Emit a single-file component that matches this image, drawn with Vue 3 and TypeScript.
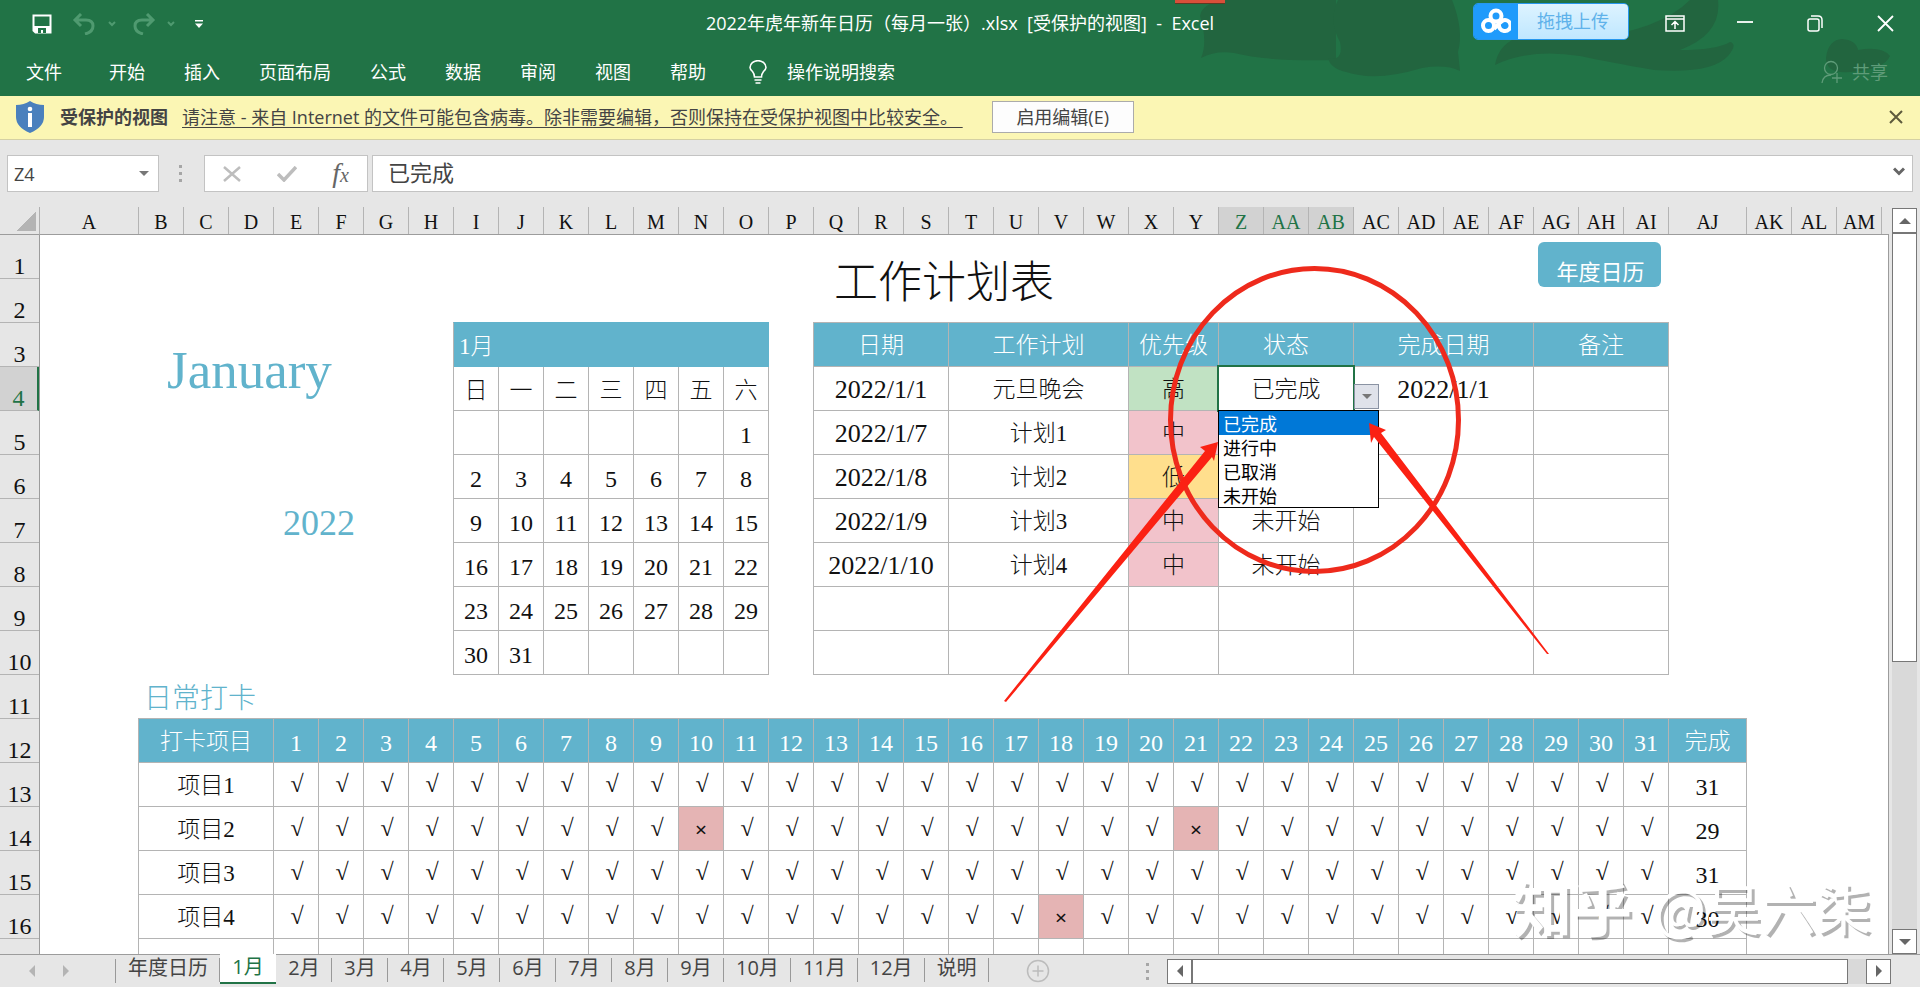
<script setup lang="ts">
import { ref } from 'vue'

interface Plan {
  date: string
  name: string
  level: string
  tone: string
  status: string
  done: string
}

const menus: string[] = ['开始', '插入', '页面布局', '公式', '数据', '审阅', '视图', '帮助']

const letters: string[] = Array.from({ length: 39 }, (_, i) =>
  i < 26 ? String.fromCharCode(65 + i) : 'A' + String.fromCharCode(65 + i - 26),
)
const selectedColumns = ['Z', 'AA', 'AB']
const rowNumbers: number[] = Array.from({ length: 16 }, (_, i) => i + 1)

const weekdays: string[] = ['日', '一', '二', '三', '四', '五', '六']
const weeks: (number | null)[][] = Array.from({ length: 6 }, (_, w) =>
  Array.from({ length: 7 }, (_, d) => {
    const day = w * 7 + d - 5
    return day >= 1 && day <= 31 ? day : null
  }),
)

const plans: Plan[] = [
  { date: '2022/1/1', name: '元旦晚会', level: '高', tone: 'high', status: '已完成', done: '2022/1/1' },
  { date: '2022/1/7', name: '计划1', level: '中', tone: 'mid', status: '', done: '' },
  { date: '2022/1/8', name: '计划2', level: '低', tone: 'low', status: '', done: '' },
  { date: '2022/1/9', name: '计划3', level: '中', tone: 'mid', status: '未开始', done: '' },
  { date: '2022/1/10', name: '计划4', level: '中', tone: 'mid', status: '未开始', done: '' },
  { date: '', name: '', level: '', tone: '', status: '', done: '' },
  { date: '', name: '', level: '', tone: '', status: '', done: '' },
]

const options: string[] = ['已完成', '进行中', '已取消', '未开始']
const chosen = ref('已完成')

const items: { name: string; missed: number[]; total: number }[] = [
  { name: '项目1', missed: [], total: 31 },
  { name: '项目2', missed: [10, 21], total: 29 },
  { name: '项目3', missed: [], total: 31 },
  { name: '项目4', missed: [18], total: 30 },
]

const tabs: string[] = ['年度日历', ...Array.from({ length: 12 }, (_, i) => `${i + 1}月`), '说明']
const activeTab = ref('1月')
const cellName = ref('Z4')
</script>

<template>
  <div class="app">
    <header class="ribbon">
      <svg class="decor" viewBox="0 0 760 96" width="760" height="96" aria-hidden="true">
        <path d="M40 16Q42 4 62 0H176V60Q110 62 74 53Q56 50 41 58Q48 42 40 16Z" />
        <path d="M178 0H292Q304 30 298 52L300 71Q286 64 262 68Q216 82 186 72Q170 68 168 58Q184 62 180 42Q168 20 178 0Z" />
        <path d="M335 65Q338 46 356 38H430Q500 30 530 0H558Q562 34 520 50Q556 50 570 42Q578 44 568 56Q552 74 494 70Q448 62 420 56Q370 48 335 65Z" />
        <path d="M666 58Q668 40 682 39Q696 40 698 50Q722 46 730 56Q724 70 690 72Q666 74 666 58Z" />
      </svg>
      <span class="marker"></span>
      <div class="titlebar">
        <div class="quick">
          <button type="button" aria-label="保存">
            <svg width="20" height="20" viewBox="0 0 20 20"><path d="M1.5 1.5h17v17h-15l-2-2z" fill="none" stroke="#fff" stroke-width="2" /><path d="M2 12h16v7H4l-2-2z" fill="#fff" /><path d="M6 14h8v5h-3v-3h-2v3H6z" fill="#217346" /></svg>
          </button>
          <button type="button" aria-label="撤消" class="dim undo">
            <svg width="24" height="22" viewBox="0 0 24 22"><path d="M9 1L3 7l6 6M3.500 7H14q7 0 7 6t-8 8" fill="none" stroke="currentColor" stroke-width="3" /></svg>
          </button>
          <button type="button" aria-label="撤消列表" class="dim"><svg width="8" height="6" viewBox="0 0 8 6"><path d="M1 1l3 3 3-3" fill="none" stroke="currentColor" stroke-width="2" /></svg></button>
          <button type="button" aria-label="恢复" class="dim redo">
            <svg width="24" height="22" viewBox="0 0 24 22"><path d="M15 1l6 6-6 6M20.500 7H10q-7 0-7 6t8 8" fill="none" stroke="currentColor" stroke-width="3" /></svg>
          </button>
          <button type="button" aria-label="恢复列表" class="dim"><svg width="8" height="6" viewBox="0 0 8 6"><path d="M1 1l3 3 3-3" fill="none" stroke="currentColor" stroke-width="2" /></svg></button>
          <button type="button" aria-label="自定义" class="custom"><svg width="8" height="8" viewBox="0 0 8 8"><path d="M0 0h8v1.500H0zM0 3.500h8L4 8z" fill="#fff" /></svg></button>
        </div>
        <h1>2022年虎年新年日历（每月一张）.xlsx&nbsp; [受保护的视图]&nbsp; -&nbsp; Excel</h1>
        <div class="window">
          <button type="button" class="upload">
            <span class="cloud"><svg width="30" height="26" viewBox="0 0 30 26" fill="none" stroke="#fff" stroke-width="4"><circle cx="15" cy="8" r="5.500" /><circle cx="7.500" cy="17.500" r="5.500" /><path d="M18 14q-1 8 5 9a5.500 5.500 0 1 0-2-10q-3 2-8 8" /></svg></span>
            <span class="drop">拖拽上传</span>
          </button>
          <button type="button" class="win" aria-label="功能区显示选项"><svg width="20" height="17" viewBox="0 0 20 17" fill="none" stroke="#fff" stroke-width="1.500"><path d="M1 1h18v15H1zM1 4h18M10 14V7M6.500 10L10 6.500l3.500 3.500" /></svg></button>
          <button type="button" class="win" aria-label="最小化"><svg width="16" height="16" viewBox="0 0 16 16"><path d="M0 7h16" stroke="#fff" stroke-width="1.800" /></svg></button>
          <button type="button" class="win" aria-label="还原"><svg width="16" height="17" viewBox="0 0 16 17" fill="none" stroke="#fff" stroke-width="1.500"><rect x="1" y="4" width="11" height="12" rx="2" /><path d="M4 1h7q4 0 4 4v8" /></svg></button>
          <button type="button" class="win" aria-label="关闭"><svg width="17" height="17" viewBox="0 0 17 17"><path d="M1 1l15 15M16 1L1 16" stroke="#fff" stroke-width="1.800" /></svg></button>
        </div>
      </div>
      <nav class="menu">
        <button type="button" class="file">文件</button>
        <button v-for="m in menus" :key="m" type="button">{{ m }}</button>
        <button type="button" class="tell">
          <svg width="18" height="24" viewBox="0 0 18 24" fill="none" stroke="#fff" stroke-width="1.600"><path d="M5.500 17q0-3-2-5.500Q1 9 1 7.500A8 6.800 0 0 1 17 7.500Q17 9 14.500 11.500q-2 2.500-2 5.500zM5.500 20h7M6.500 23h5" /></svg>
          操作说明搜索
        </button>
        <button type="button" class="share">
          <svg width="22" height="24" viewBox="0 0 22 24" fill="none" stroke="currentColor" stroke-width="1.300"><circle cx="10" cy="8" r="6.500" /><path d="M1 23q1-8 9-8M16 13v10M11 18h10" /></svg>
          共享
        </button>
      </nav>
    </header>

    <section class="notice">
      <svg width="28" height="32" viewBox="0 0 28 32"><path d="M14 0q6 4 14 4v12q0 10-14 16Q0 26 0 16V4q8 0 14-4z" fill="#4a80bd" /><path d="M12 12h4v14h-4z" fill="#fff" /><circle cx="14" cy="8" r="2.300" fill="#fff" /></svg>
      <strong>受保护的视图</strong>
      <a href="#">请注意 - 来自 Internet 的文件可能包含病毒。除非需要编辑，否则保持在受保护视图中比较安全。&nbsp;</a>
      <button type="button" class="enable">启用编辑(E)</button>
      <button type="button" class="dismiss" aria-label="关闭消息"><svg width="14" height="14" viewBox="0 0 14 14"><path d="M1 1l12 12M13 1L1 13" stroke="#5d5a3c" stroke-width="2" /></svg></button>
    </section>

    <section class="formula">
      <label class="name"><input v-model="cellName" aria-label="名称框" /><i class="caret"></i></label>
      <span class="grip"></span>
      <div class="fx">
        <button type="button" aria-label="取消"><svg width="18" height="16" viewBox="0 0 18 16"><path d="M1 1l16 14M17 1L1 15" stroke="#bdbdbd" stroke-width="2.500" /></svg></button>
        <button type="button" aria-label="输入"><svg width="20" height="16" viewBox="0 0 20 16"><path d="M1 8l6 6L19 1" fill="none" stroke="#bdbdbd" stroke-width="3.500" /></svg></button>
        <button type="button" class="fn" aria-label="插入函数"><i>f</i><i class="sub">x</i></button>
      </div>
      <div class="entry">
        <input v-model="chosen" aria-label="编辑栏" />
        <svg width="12" height="9" viewBox="0 0 12 9"><path d="M1 1.500l5 5 5-5" fill="none" stroke="#666" stroke-width="3" /></svg>
      </div>
    </section>

    <main class="workspace">
      <div class="frame">
        <div class="corner"></div>
        <div class="cols">
          <span v-for="l in letters" :key="l" :class="{ on: selectedColumns.includes(l) }">{{ l }}</span>
        </div>
        <div class="rows">
          <span v-for="n in rowNumbers" :key="n" :class="{ on: n === 4 }">{{ n }}</span>
        </div>
        <div class="sheet">
          <h2 class="month">January</h2>
          <p class="year">2022</p>
          <h2 class="title">工作计划表</h2>
          <button type="button" class="annual">年度日历</button>

          <table class="calendar">
            <thead>
              <tr><th colspan="7" class="banner">1月</th></tr>
              <tr><th v-for="w in weekdays" :key="w">{{ w }}</th></tr>
            </thead>
            <tbody>
              <tr v-for="(week, i) in weeks" :key="i">
                <td v-for="(d, j) in week" :key="j">{{ d }}</td>
              </tr>
            </tbody>
          </table>

          <table class="plan">
            <colgroup><col class="w3" /><col class="w4" /><col class="w2" /><col class="w3" /><col class="w4" /><col class="w3" /></colgroup>
            <thead>
              <tr><th>日期</th><th>工作计划</th><th>优先级</th><th>状态</th><th>完成日期</th><th>备注</th></tr>
            </thead>
            <tbody>
              <tr v-for="(p, i) in plans" :key="i">
                <td class="date">{{ p.date }}</td>
                <td>{{ p.name }}</td>
                <td :class="p.tone">{{ p.level }}</td>
                <td>{{ p.status }}</td>
                <td class="date">{{ p.done }}</td>
                <td></td>
              </tr>
            </tbody>
          </table>

          <div class="picker">
            <div class="active"></div>
            <button type="button" class="arrow" aria-label="展开列表"><i class="caret"></i></button>
            <ul role="listbox" aria-label="状态">
              <li v-for="o in options" :key="o" role="option" :aria-selected="o === chosen" @click="chosen = o">{{ o }}</li>
            </ul>
          </div>

          <h3 class="daily">日常打卡</h3>
          <table class="habit">
            <colgroup><col class="w3" /><col v-for="d in 31" :key="d" class="w1" /><col class="wt" /></colgroup>
            <thead>
              <tr><th>打卡项目</th><th v-for="d in 31" :key="d" class="num">{{ d }}</th><th>完成</th></tr>
            </thead>
            <tbody>
              <tr v-for="it in items" :key="it.name">
                <td>{{ it.name }}</td>
                <td v-for="d in 31" :key="d" :class="it.missed.includes(d) ? 'miss' : 'tick'">{{ it.missed.includes(d) ? '×' : '√' }}</td>
                <td class="num">{{ it.total }}</td>
              </tr>
              <tr><td v-for="d in 33" :key="d"></td></tr>
            </tbody>
          </table>

          <svg class="marks" width="1849" height="719" viewBox="40 235 1849 719" aria-hidden="true">
            <ellipse cx="1314.500" cy="420" rx="144" ry="151.500" fill="none" stroke="#ee2a1c" stroke-width="5" />
            <path d="M1218 442L1200 447L1205 451L1004 701L1006 702L1212 457L1214 461Z" fill="#fb2113" />
            <path d="M1369 423L1386 430L1381 433L1549 654L1547 654L1374 437L1371 443Z" fill="#fb2113" />
          </svg>
          <div class="watermark"><span class="brand">知乎</span><span>@吴六柒</span></div>
        </div>
      </div>
      <div class="vbar">
        <button type="button" aria-label="向上滚动"><i class="up"></i></button>
        <span class="thumb"></span>
        <span class="track"></span>
        <button type="button" aria-label="向下滚动"><i class="down"></i></button>
      </div>
    </main>

    <footer class="bottom">
      <div class="steps"><i class="left"></i><i class="right"></i></div>
      <div class="tabs" role="tablist">
        <button v-for="t in tabs" :key="t" type="button" role="tab" :aria-selected="t === activeTab" @click="activeTab = t">{{ t }}</button>
      </div>
      <button type="button" class="add" aria-label="新工作表"><svg width="24" height="24" viewBox="0 0 24 24" fill="none" stroke="#bcbcbc" stroke-width="1.500"><circle cx="12" cy="12" r="10.500" /><path d="M12 6.500v11M6.500 12h11" /></svg></button>
      <span class="grip"></span>
      <div class="hbar">
        <button type="button" aria-label="向左滚动"><i class="left"></i></button>
        <span class="thumb"></span>
        <span class="track"></span>
        <button type="button" aria-label="向右滚动"><i class="right"></i></button>
      </div>
    </footer>
  </div>
</template>

<style>
body {
  margin: 0;
}
</style>

<style scoped>
.app {
  --blue: #61b3cc;
  --green: #217346;
  --line: #b4b4b4;
  display: flex;
  flex-direction: column;
  height: 100vh;
  overflow: hidden;
  background: #e6e6e6;
  color: #444;
  font-family: "Open Sans", "Noto Sans CJK SC", sans-serif;
  font-size: 18px;
  line-height: 24px;
}
.app *,
.app *::before {
  box-sizing: border-box;
}
button {
  margin: 0;
  padding: 0;
  border: 0;
  background: none;
  color: inherit;
  font: inherit;
  white-space: nowrap;
}
input {
  min-width: 0;
  border: 0;
  outline: 0;
  padding: 0;
  background: none;
  color: inherit;
  font: inherit;
}
h1,
h2,
h3,
p,
ul {
  margin: 0;
  padding: 0;
  font-weight: 400;
  list-style: none;
}
svg {
  flex: none;
  display: block;
}

.ribbon {
  position: relative;
  flex: none;
  background: var(--green);
  color: #fff;
}
.decor {
  position: absolute;
  top: 0;
  right: 0;
  fill: #22653f;
}
.marker {
  position: absolute;
  top: 0;
  left: 1175px;
  width: 50px;
  height: 4px;
  background: #d94f3a;
  border-bottom: 1px solid #5c3a22;
}
.titlebar {
  position: relative;
  display: grid;
  grid-template-columns: 1fr auto 1fr;
  align-items: center;
  height: 48px;
}
.titlebar h1 {
  padding-bottom: 2px;
  font-size: 18px;
}
.quick {
  display: flex;
  align-items: center;
  padding-left: 32px;
}
.dim {
  color: #4f9a70;
}
.undo {
  margin: 0 12px 0 20px;
}
.redo {
  margin: 0 11px 0 16px;
}
.custom {
  margin-left: 20px;
}
.window {
  display: flex;
  align-items: center;
  justify-content: flex-end;
  height: 48px;
}
.win {
  display: grid;
  place-items: center;
  width: 70px;
  height: 48px;
  padding-bottom: 2px;
}
.upload {
  display: flex;
  width: 156px;
  height: 37px;
  margin: 0 11px 6px 0;
  border: 1px solid #2697ee;
  border-radius: 5px;
  overflow: hidden;
}
.cloud {
  display: grid;
  place-items: center;
  width: 44px;
  height: 36px;
  background: #1f9bfb;
}
.cloud svg {
  margin-bottom: 2px;
}
.drop {
  flex: 1;
  background: linear-gradient(#ddf3ff, #bfe7ff);
  color: #5fb2ea;
  line-height: 34px;
}
.menu {
  position: relative;
  display: flex;
  align-items: center;
  gap: 39px;
  height: 48px;
  padding: 0 32px 0 26px;
}
.file {
  margin-right: 8px;
}
.tell {
  display: flex;
  align-items: center;
  gap: 20px;
  margin-left: 4px;
}
.share {
  display: flex;
  align-items: center;
  gap: 9px;
  margin-left: auto;
  color: #5f9c79;
}

.notice {
  flex: none;
  display: flex;
  align-items: center;
  height: 44px;
  padding: 0 17px 2px 16px;
  background: #fbf6b4;
  border-bottom: 1px solid #d4d0a4;
}
.notice strong {
  margin: 0 14px 0 16px;
}
.notice a {
  color: #444;
  white-space: nowrap;
  text-underline-offset: 3px;
}
.enable {
  width: 142px;
  height: 32px;
  margin-left: 29px;
  border: 1px solid #ababab;
  background: #fdfdfd;
}
.dismiss {
  margin-left: auto;
}

.formula {
  flex: none;
  display: flex;
  height: 67px;
  padding: 15px 7px;
}
.name,
.fx,
.entry {
  display: flex;
  align-items: center;
  background: #fff;
  border: 1px solid #c3c3c3;
}
.name {
  width: 152px;
  padding: 0 9px 0 6px;
}
.name input {
  flex: 1;
}
.caret {
  border: 5px solid transparent;
  border-top: 5px solid #777;
  border-bottom: 0;
}
.grip {
  align-self: center;
  width: 3px;
  height: 17px;
  background: repeating-linear-gradient(#a6a6a6 0 3px, transparent 3px 7px);
}
.formula .grip {
  margin: 0 22px 0 20px;
}
.fx {
  width: 164px;
  justify-content: space-between;
  padding: 0 18px;
}
.fn {
  color: #666;
  font: italic 28px/32px "Liberation Serif", serif;
}
.fn .sub {
  font-size: 20px;
}
.entry {
  flex: 1;
  margin-left: 4px;
  padding: 0 7px 4px 15px;
  font-size: 22px;
}
.entry input {
  flex: 1;
}

.workspace {
  flex: 1;
  min-height: 0;
  display: flex;
}
.frame {
  flex: 1;
  min-width: 0;
  display: grid;
  grid-template: 28px minmax(0, 1fr) / 40px minmax(0, 1fr);
  font-family: "Liberation Serif", "Noto Sans CJK SC", serif;
  color: #111;
}
.corner {
  border-right: 1px solid #b0b0b0;
  border-bottom: 1px solid #9c9c9c;
  background: linear-gradient(135deg, transparent 50%, #b4b4b4 50%) 16px 4px / 20px 20px no-repeat;
}
.cols {
  display: grid;
  grid-template-columns: 99px repeat(34, 45px) 78px repeat(3, 45px);
  overflow: hidden;
  border-bottom: 1px solid #9c9c9c;
  font-size: 20px;
  line-height: 31px;
  text-align: center;
}
.cols span {
  border-right: 1px solid #b4b4b4;
}
.cols .on {
  background: #d2d2d2;
  color: var(--green);
  border-bottom: 2px solid var(--green);
}
.rows {
  overflow: hidden;
  border-right: 1px solid #9c9c9c;
  font-size: 24px;
  text-align: center;
}
.rows span {
  display: block;
  height: 44px;
  padding-top: 19px;
  border-bottom: 1px solid #b4b4b4;
}
.rows .on {
  background: #d2d2d2;
  color: var(--green);
  border-right: 2px solid var(--green);
}
.sheet {
  position: relative;
  display: grid;
  grid-template-columns: 99px repeat(34, 45px) 78px repeat(3, 45px);
  grid-template-rows: repeat(17, 44px);
  overflow: hidden;
  background: #fff;
  border-right: 1px solid #9c9c9c;
  font-size: 23px;
}
.month {
  grid-area: 3 / 2 / 5 / 8;
  padding-left: 28px;
  color: var(--blue);
  font-size: 53px;
  line-height: 94px;
}
.year {
  grid-area: 7 / 4 / 8 / 8;
  padding-left: 54px;
  color: var(--blue);
  font-size: 36px;
  line-height: 48px;
}
.title {
  grid-area: 1 / 17 / 3 / 28;
  padding-left: 20px;
  font-size: 44px;
  font-weight: 300;
  line-height: 98px;
}
.annual {
  grid-area: 1 / 33 / 3 / 37;
  width: 123px;
  height: 45px;
  margin: 7px 0 0 4px;
  padding: 16px 0 0 2px;
  border-radius: 6px;
  background: var(--blue);
  color: #fff;
  font-size: 22px;
}

table {
  align-self: start;
  justify-self: start;
  table-layout: fixed;
  margin: -1px 0 0 -1px;
  border-spacing: 0;
  border-left: 1px solid var(--line);
  border-top: 1px solid var(--line);
  font-weight: 300;
  text-align: center;
}
th,
td {
  height: 44px;
  padding: 2px 0 0;
  border-right: 1px solid var(--line);
  border-bottom: 1px solid var(--line);
  font-weight: 300;
  white-space: nowrap;
}
.w1 {
  width: 45px;
}
.w2 {
  width: 90px;
}
.w3 {
  width: 135px;
}
.w4 {
  width: 180px;
}
.wt {
  width: 78px;
}
.calendar {
  grid-area: 3 / 9 / 11 / 16;
  width: 316px;
  border-top-color: var(--blue);
}
.calendar th {
  padding-top: 4px;
}
.calendar td,
.num {
  padding-top: 4px;
  font-size: 24px;
}
.calendar .banner {
  padding: 4px 0 0 5px;
  border-color: var(--blue);
  background: var(--blue);
  color: #fff;
  text-align: left;
}
.plan {
  grid-area: 3 / 17 / 11 / 36;
  width: 856px;
}
.plan th,
.habit th {
  background: var(--blue);
  color: #fff;
}
.plan .date {
  font-size: 26px;
}
.high {
  background: #c1e2c3;
}
.mid {
  background: #f2c3cb;
}
.low {
  background: #ffdf8d;
}
.daily {
  grid-area: 11 / 2 / 12 / 8;
  padding-left: 5px;
  color: var(--blue);
  font-size: 28px;
  font-weight: 300;
  line-height: 48px;
}
.habit {
  grid-area: 12 / 2 / 18 / 37;
  width: 1609px;
}
.habit .tick {
  padding: 0 0 2px 2px;
  font-size: 24px;
}
.habit .miss {
  background: #e5b4b4;
  font-size: 22px;
  font-weight: 700;
}

.picker {
  grid-area: 4 / 26 / 7 / 30;
  position: relative;
}
.active {
  position: absolute;
  top: -2px;
  left: -2px;
  width: 138px;
  height: 47px;
  border: 2px solid var(--green);
}
.arrow {
  position: absolute;
  top: 17px;
  left: 135px;
  display: grid;
  place-items: center;
  width: 25px;
  height: 25px;
  border: 1px solid #8a93a3;
  background: #dfe2ea;
}
.picker ul {
  position: absolute;
  top: 43px;
  left: -1px;
  width: 161px;
  border: 1px solid #000;
  background: #fff;
  color: #000;
  font-family: "Noto Sans CJK SC", sans-serif;
  font-size: 18px;
  line-height: 24px;
}
.picker li {
  padding-left: 4px;
}
.picker li[aria-selected="true"] {
  background: #0078d7;
  color: #fff;
}
.marks {
  position: absolute;
  top: 0;
  left: 0;
  pointer-events: none;
}
.watermark {
  position: absolute;
  right: 17px;
  bottom: 12px;
  display: flex;
  gap: 22px;
  color: #fff;
  font: 55px/72px "Noto Sans CJK SC", sans-serif;
  text-shadow: 3px 3px 0 rgba(0, 0, 0, 0.3);
  pointer-events: none;
}
.brand {
  font-size: 60px;
  font-weight: 700;
}

.vbar {
  flex: none;
  display: flex;
  flex-direction: column;
  width: 31px;
  padding: 1px 3px 0;
}
.vbar button,
.hbar button {
  display: grid;
  place-items: center;
  flex: none;
  width: 25px;
  height: 25px;
  border: 1px solid #777;
  background: #fff;
}
.thumb {
  border: 1px solid #777;
  background: #fff;
}
.track {
  background: #d9d9d9;
}
.vbar .thumb {
  flex: 428;
}
.vbar .track {
  flex: 268;
}
.up,
.down,
.left,
.right {
  width: 0;
  height: 0;
  border: 6px solid transparent;
}
.up {
  border-top: 0;
  border-bottom-color: #666;
}
.down {
  border-bottom: 0;
  border-top-color: #666;
}
.left {
  border-left: 0;
  border-right-color: #666;
}
.right {
  border-right: 0;
  border-left-color: #666;
}

.bottom {
  flex: none;
  display: flex;
  align-items: center;
  height: 33px;
  padding-right: 29px;
  border-top: 1px solid #9c9c9c;
}
.steps {
  position: relative;
  display: flex;
  gap: 28px;
  width: 116px;
  padding: 6px 0 6px 29px;
  border-right: 1px solid #999;
}
.steps .left {
  border-right-color: #b4b4b4;
}
.steps .right {
  border-left-color: #b4b4b4;
}
.tabs {
  display: flex;
  align-self: stretch;
  margin-top: -1px;
  font-size: 20px;
}
.tabs button {
  position: relative;
  height: 30px;
  min-width: 56px;
  padding: 0 12px 2px;
}
.tabs button::before {
  content: "";
  position: absolute;
  right: 0;
  top: 4px;
  width: 1px;
  height: 24px;
  background: #999;
}
.tabs [aria-selected="true"] {
  background: #fff;
  color: var(--green);
  border-bottom: 2px solid var(--green);
}
.tabs [aria-selected="true"]::before {
  display: none;
}
.add {
  margin-left: 37px;
}
.bottom .grip {
  margin-left: auto;
}
.hbar {
  display: flex;
  width: 724px;
  margin-left: 18px;
}
.hbar .thumb {
  flex: 656;
}
.hbar .track {
  flex: 18;
}
</style>
